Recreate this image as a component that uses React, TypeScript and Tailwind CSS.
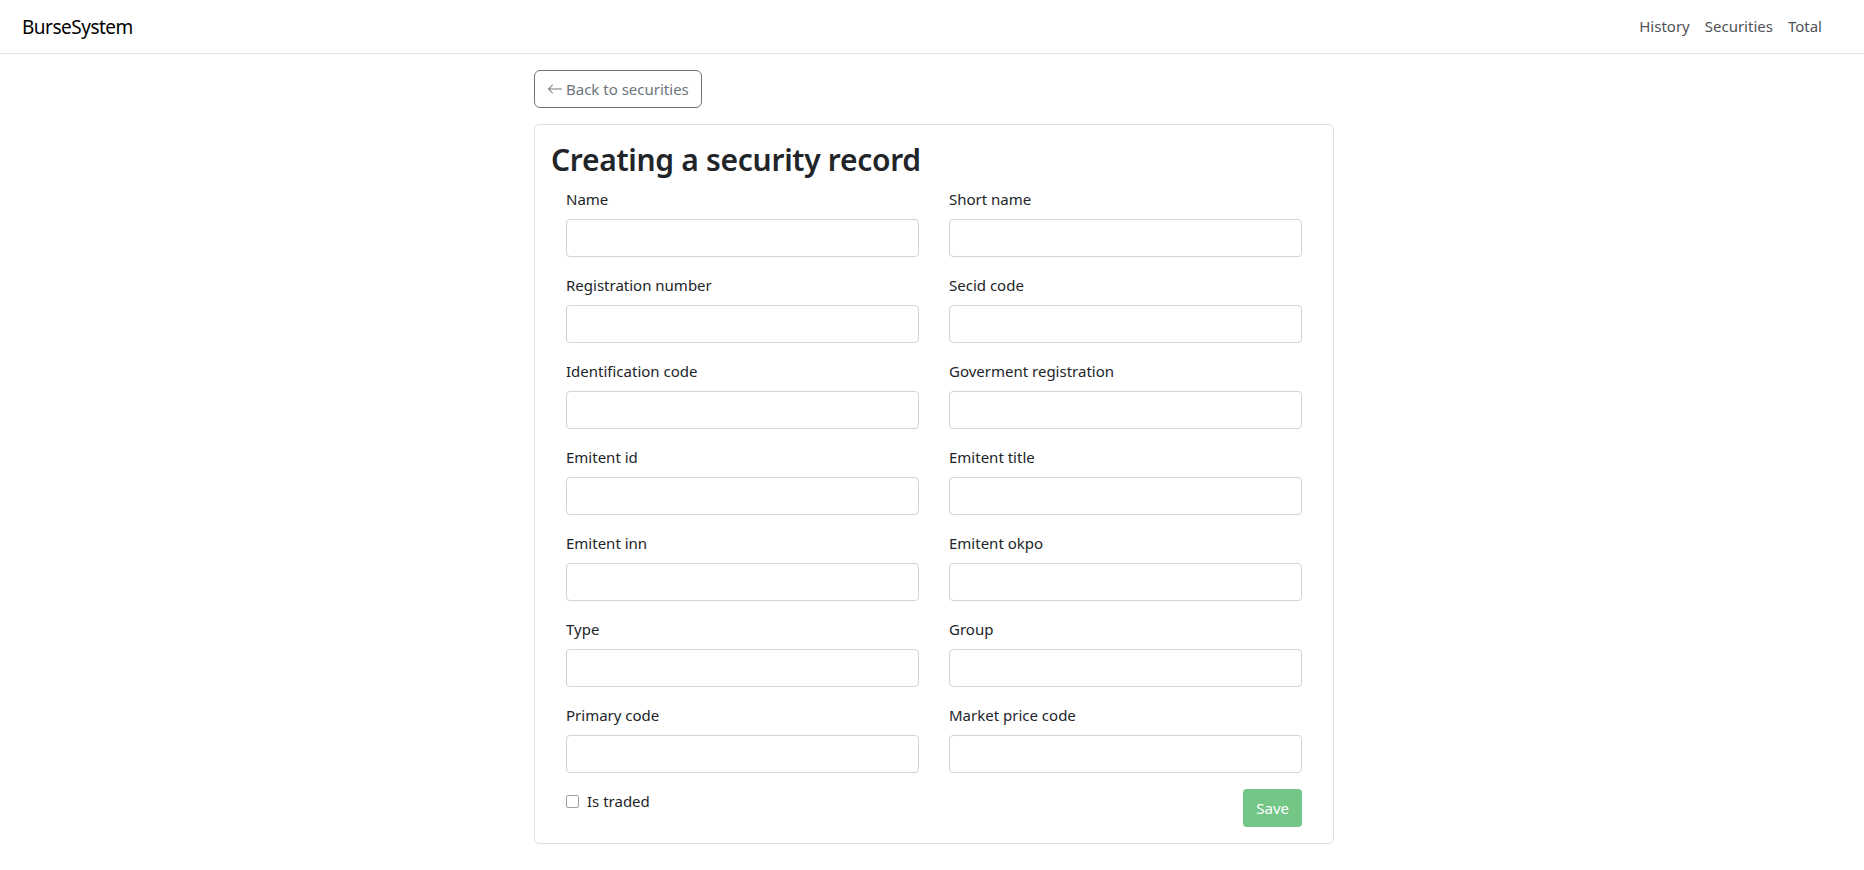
const fields: [string, string][] = [
  ["Name", "Short name"],
  ["Registration number", "Secid code"],
  ["Identification code", "Goverment registration"],
  ["Emitent id", "Emitent title"],
  ["Emitent inn", "Emitent okpo"],
  ["Type", "Group"],
  ["Primary code", "Market price code"],
];

function Field({ label }: { label: string }) {
  return (
    <div className="mb-4 flex flex-col">
      <label className="mb-2 text-[15px] leading-6 text-[#212529]">{label}</label>
      <input
        type="text"
        className="h-[38px] w-full rounded-[4px] border border-[#ced4da] bg-white px-3 outline-none"
      />
    </div>
  );
}

export default function App() {
  return (
    <div className="min-h-screen bg-white font-['Noto_Sans',sans-serif] text-[#212529]">
      <nav className="flex h-[54px] items-center justify-between border-b border-[#dee2e6] pl-[22px] pr-[42px]">
        <a className="text-[19px] leading-[30px] tracking-[-0.5px] text-black">BurseSystem</a>
        <div className="flex gap-[15px] text-[15px] text-[#4f5358]">
          <a>History</a>
          <a>Securities</a>
          <a>Total</a>
        </div>
      </nav>

      <main className="flex justify-center pl-[4px] pt-4">
        <div className="w-[800px]">
          <button className="flex h-[38px] items-center gap-[3px] rounded-[6px] border border-[#6c757d] px-3 text-[15px] text-[#6c757d]">
            <svg width="16" height="16" viewBox="0 0 16 16" fill="currentColor">
              <path
                fillRule="evenodd"
                d="M15 8a.5.5 0 0 0-.5-.5H2.707l3.147-3.146a.5.5 0 1 0-.708-.708l-4 4a.5.5 0 0 0 0 .708l4 4a.5.5 0 0 0 .708-.708L2.707 8.5H14.5A.5.5 0 0 0 15 8z"
              />
            </svg>
            Back to securities
          </button>

          <div className="mt-4 rounded-[5px] border border-[#dfdfdf] p-4">
            <h2 className="mb-2 text-[30px] font-semibold leading-[38px] tracking-[-0.3px] text-[#212529]">
              Creating a security record
            </h2>
            <form className="px-[15px]">
              <div className="grid grid-cols-2 gap-x-[30px]">
                {fields.map(([a, b]) => (
                  <div key={a} className="contents">
                    <Field label={a} />
                    <Field label={b} />
                  </div>
                ))}
              </div>
              <div className="flex items-start justify-between">
                <label className="flex items-center gap-2 text-[15px] leading-6">
                  <span className="h-[13px] w-[13px] rounded-[2px] border border-[#a0a0a0] bg-white" />
                  Is traded
                </label>
                <button
                  type="button"
                  className="h-[38px] rounded-[4px] bg-[#73c686] px-[13px] text-[15px] text-white"
                >
                  Save
                </button>
              </div>
            </form>
          </div>
        </div>
      </main>
    </div>
  );
}
